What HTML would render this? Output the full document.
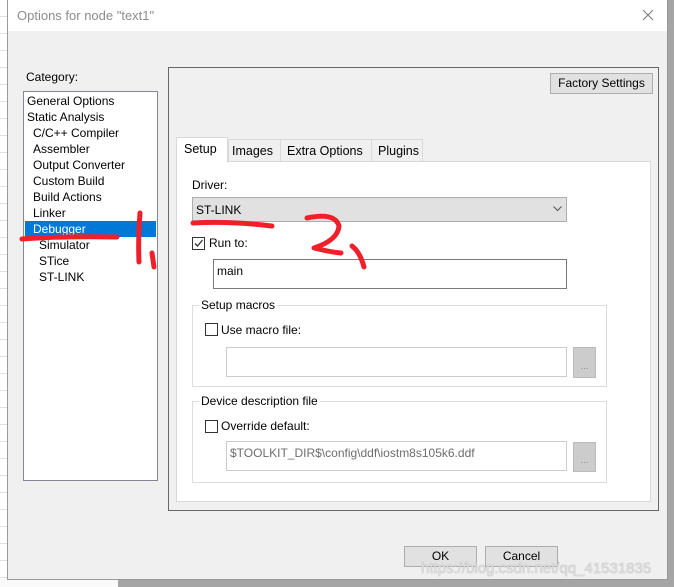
<!DOCTYPE html><html><head><style>
body{margin:0;width:674px;height:587px;position:relative;overflow:hidden;background:#a5a5a5;font-family:"Liberation Sans","Noto Sans CJK SC",sans-serif;font-size:12px;color:#000}
.a{position:absolute;box-sizing:border-box}
.t{position:absolute;white-space:nowrap;line-height:14px}
.cb{position:absolute;width:13px;height:13px;border:1px solid #333;background:#fff;box-sizing:border-box}
.btn{position:absolute;box-sizing:border-box;background:#e1e1e1;border:1px solid #adadad;text-align:center;line-height:18px}
</style></head><body>
<div class="a" style="left:0;top:0;width:8px;height:587px;background:#fff;background-image:repeating-linear-gradient(#fff 0,#fff 16px,#e0e0e0 16px,#e0e0e0 17px)"></div>
<div class="a" style="left:0;top:579px;width:118px;height:8px;background:#fafafa"></div>
<div class="a" style="left:7px;top:0;width:661px;height:580px;background:#f0f0f0;border:1px solid #999"></div>
<div class="a" style="left:8px;top:0;width:659px;height:31px;background:#fff"></div>
<div class="t" style="left:17px;top:9px;font-size:13px;color:#8c8c8c">Options for node "text1"</div>
<svg class="a" style="left:642px;top:9px" width="12" height="12"><path d="M1 1L11 11M11 1L1 11" stroke="#777" stroke-width="1"/></svg>
<div class="t" style="left:26px;top:70px">Category:</div>
<div class="a" style="left:23px;top:91px;width:135px;height:390px;background:#fff;border:1px solid #828790"></div>
<div class="a" style="left:25px;top:221px;width:131px;height:16px;background:#0078d7"></div>
<div class="t" style="left:27px;top:94px">General Options</div>
<div class="t" style="left:27px;top:110px">Static Analysis</div>
<div class="t" style="left:33px;top:126px">C/C++ Compiler</div>
<div class="t" style="left:33px;top:142px">Assembler</div>
<div class="t" style="left:33px;top:158px">Output Converter</div>
<div class="t" style="left:33px;top:174px">Custom Build</div>
<div class="t" style="left:33px;top:190px">Build Actions</div>
<div class="t" style="left:33px;top:206px">Linker</div>
<div class="t" style="left:33px;top:222px;color:#fff">Debugger</div>
<div class="t" style="left:39px;top:238px">Simulator</div>
<div class="t" style="left:39px;top:254px">STice</div>
<div class="t" style="left:39px;top:270px">ST-LINK</div>
<div class="a" style="left:168px;top:67px;width:491px;height:444px;border:1px solid #666"></div>
<div class="btn" style="left:550px;top:73px;width:103px;height:21px">Factory Settings</div>
<div class="a" style="left:176px;top:161px;width:475px;height:341px;background:#fff;border:1px solid #d9d9d9"></div>
<div class="a" style="left:228px;top:139px;width:53px;height:23px;background:#f0f0f0;border:1px solid #d9d9d9"></div>
<div class="a" style="left:280px;top:139px;width:92px;height:23px;background:#f0f0f0;border:1px solid #d9d9d9"></div>
<div class="a" style="left:371px;top:139px;width:52px;height:23px;background:#f0f0f0;border:1px solid #d9d9d9"></div>
<div class="a" style="left:176px;top:137px;width:52px;height:26px;background:#fff;border:1px solid #d9d9d9;border-bottom:none"></div>
<div class="t" style="left:184px;top:142px;font-size:12.5px">Setup</div>
<div class="t" style="left:232px;top:144px;font-size:12.5px">Images</div>
<div class="t" style="left:287px;top:144px;font-size:12.5px">Extra Options</div>
<div class="t" style="left:378px;top:144px;font-size:12.5px">Plugins</div>
<div class="t" style="left:192px;top:178px">Driver:</div>
<div class="a" style="left:192px;top:197px;width:375px;height:25px;background:#e1e1e1;border:1px solid #adadad"></div>
<div class="t" style="left:196px;top:203px">ST-LINK</div>
<svg class="a" style="left:553px;top:206px" width="9" height="6"><path d="M0.5 0.5L4.5 4.5L8.5 0.5" stroke="#555" fill="none"/></svg>
<div class="cb" style="left:192px;top:237px"></div>
<svg class="a" style="left:193px;top:238px" width="11" height="11"><path d="M2 5.5L4.5 8L9.5 2" stroke="#333" stroke-width="1.3" fill="none"/></svg>
<div class="t" style="left:209px;top:236px">Run to:</div>
<div class="a" style="left:213px;top:259px;width:354px;height:30px;border:1px solid #7a7a7a;background:#fff"></div>
<div class="t" style="left:217px;top:264px">main</div>
<div class="a" style="left:192px;top:305px;width:415px;height:82px;border:1px solid #dcdcdc"></div>
<div class="t" style="left:199px;top:298px;background:#fff;padding:0 2px">Setup macros</div>
<div class="cb" style="left:205px;top:323px"></div>
<div class="t" style="left:221px;top:323px">Use macro file:</div>
<div class="a" style="left:226px;top:347px;width:341px;height:30px;border:1px solid #ccc"></div>
<div class="a" style="left:573px;top:347px;width:23px;height:31px;background:#ccc;border:1px solid #bbb;color:#888;font-size:9px;text-align:center;line-height:36px">...</div>
<div class="a" style="left:192px;top:401px;width:415px;height:82px;border:1px solid #dcdcdc"></div>
<div class="t" style="left:199px;top:394px;background:#fff;padding:0 2px">Device description file</div>
<div class="cb" style="left:205px;top:420px"></div>
<div class="t" style="left:221px;top:419px">Override default:</div>
<div class="a" style="left:226px;top:441px;width:341px;height:30px;border:1px solid #ccc"></div>
<div class="t" style="left:230px;top:446px;color:#6d6d6d">$TOOLKIT_DIR$\config\ddf\iostm8s105k6.ddf</div>
<div class="a" style="left:573px;top:442px;width:23px;height:30px;background:#ccc;border:1px solid #bbb;color:#888;font-size:9px;text-align:center;line-height:34px">...</div>
<div class="btn" style="left:404px;top:546px;width:73px;height:21px">OK</div>
<div class="btn" style="left:485px;top:546px;width:73px;height:21px">Cancel</div>
<div class="t" style="left:421px;top:560px;font-size:15px;line-height:18px;color:#ddd;text-shadow:0 0 1px #999">https://blog.csdn.net/qq_41531835</div>
<svg class="a" style="left:0;top:0" width="674" height="587"><g stroke="#f0202a" stroke-width="5" fill="none" stroke-linecap="round" stroke-linejoin="round">
<path d="M22 239Q60 236 117 237"/>
<path d="M140 213Q138 240 139 262"/>
<path d="M152 253L154 267"/>
<path d="M193 223Q230 221 272 226"/>
<path d="M307 218Q335 212 339 226Q338 240 314 248Q330 252 341 253"/>
<path d="M352 246Q360 252 364 267"/>
</g></svg>
</body></html>
